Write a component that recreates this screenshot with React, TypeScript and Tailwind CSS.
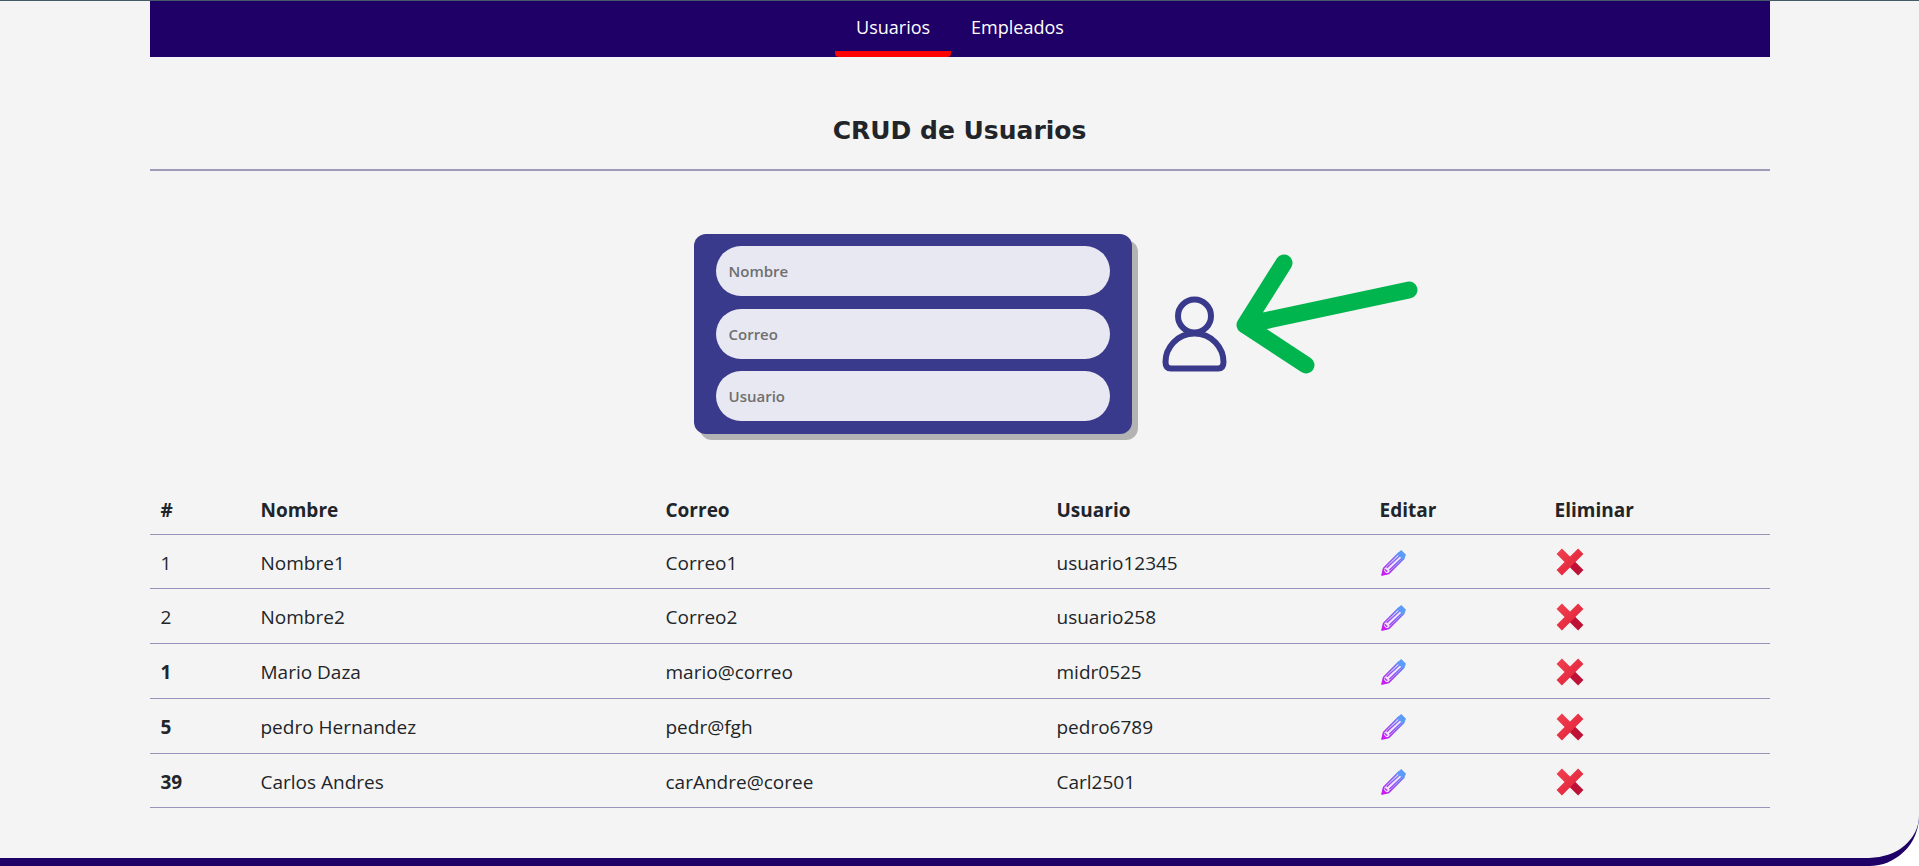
const ROWS = [
  { id: "1", strong: false, nombre: "Nombre1", correo: "Correo1", usuario: "usuario12345" },
  { id: "2", strong: false, nombre: "Nombre2", correo: "Correo2", usuario: "usuario258" },
  { id: "1", strong: true, nombre: "Mario Daza", correo: "mario@correo", usuario: "midr0525" },
  { id: "5", strong: true, nombre: "pedro Hernandez", correo: "pedr@fgh", usuario: "pedro6789" },
  { id: "39", strong: true, nombre: "Carlos Andres", correo: "carAndre@coree", usuario: "Carl2501" },
];

function PencilIcon({ uid }: { uid: string }) {
  return (
    <svg width="27" height="27" viewBox="0 0 26 26" fill="none" aria-hidden="true">
      <defs>
        <linearGradient id={uid} x1="2" y1="25" x2="24" y2="2" gradientUnits="userSpaceOnUse">
          <stop offset="0" stopColor="#c81cf0" />
          <stop offset="1" stopColor="#4f96f8" />
        </linearGradient>
      </defs>
      <path
        d="M18 4 23 9 8.5 23.5 2 25 3.5 18.5Z"
        fill="#efe6fb"
        stroke={`url(#${uid})`}
        strokeWidth="1.5"
        strokeLinejoin="round"
      />
      <path d="M6.5 18 19 6.5M9 20.5 21 9M4.5 19.5 7 22" stroke={`url(#${uid})`} strokeWidth="1.4" />
      <path d="M17.5 3.5 20.5 1 25 5.5 24 8 22.5 10 16 5Z" fill="#5b9cf8" />
      <path d="M1.5 25.5 2.8 20 7 24.2Z" fill="#c81cf0" />
    </svg>
  );
}

function CrossIcon({ uid }: { uid: string }) {
  return (
    <svg width="28" height="28" viewBox="0 0 26 26" aria-hidden="true">
      <defs>
        <linearGradient id={uid} x1="2" y1="2" x2="24" y2="24" gradientUnits="userSpaceOnUse">
          <stop offset="0" stopColor="#f0404f" />
          <stop offset="1" stopColor="#e01f38" />
        </linearGradient>
      </defs>
      <path d="M13 13 23 23" stroke="#bd1236" strokeWidth="7" />
      <path d="M3 3 13 13M23 3 3 23" stroke={`url(#${uid})`} strokeWidth="7" />
    </svg>
  );
}

function UserIcon() {
  return (
    <svg width="72" height="76" viewBox="0 0 72 76" fill="none" aria-hidden="true">
      <circle cx="35.5" cy="20" r="16.5" stroke="#3a3a8c" strokeWidth="6" />
      <path
        d="M35.5 37.5C18 37.5 6.5 52 6.5 66C6.5 70.5 8.5 72.5 12 72.5H59C62.5 72.5 64.5 70.5 64.5 66C64.5 52 53 37.5 35.5 37.5Z"
        stroke="#3a3a8c"
        strokeWidth="6"
        strokeLinejoin="round"
      />
    </svg>
  );
}

function ArrowMark() {
  return (
    <svg width="200" height="130" viewBox="0 0 200 130" fill="none" aria-hidden="true">
      <path
        d="M62 13 23 75 84 115M23 75 187 40"
        stroke="#00b44e"
        strokeWidth="17"
        strokeLinecap="round"
        strokeLinejoin="round"
      />
    </svg>
  );
}

function Field({ label }: { label: string }) {
  return (
    <input
      placeholder={label}
      className="h-[50px] w-full rounded-[25px] bg-[#e8e8f2] px-[13px] text-[15px] font-semibold outline-none placeholder:text-[#6f6f6f]"
    />
  );
}

export default function App() {
  return (
    <div className="h-[866px] overflow-hidden rounded-br-[50px] border-t border-b-8 border-t-[#445a66] border-b-[#1f0066] bg-[#f4f4f4] font-['Open_Sans',sans-serif] text-[#212529]">
      <div className="mx-auto w-[1620px]">
        <nav className="flex h-14 justify-center bg-[#1f0066] text-[18px] text-white">
          <a className="flex h-full w-[116px] items-start justify-center rounded-b-[4px] border-b-[6px] border-b-[#ff0000] pt-[13px]">
            Usuarios
          </a>
          <a className="flex h-full items-start justify-center px-5 pt-[13px]">Empleados</a>
        </nav>

        <h1 className="mt-[56px] text-center font-['DejaVu_Sans',sans-serif] text-[25px] leading-9 font-bold">
          CRUD de Usuarios
        </h1>
        <hr className="mt-[20px] border-t-2 border-[#a09ab8]" />

        <div className="mt-[63px] flex items-start pl-[544px]">
          <form className="flex h-[200px] w-[438px] flex-col gap-[12.5px] rounded-xl bg-[#3a3a8c] px-[22px] pt-3 shadow-[6px_6px_0_#b3b3b3]">
            <Field label="Nombre" />
            <Field label="Correo" />
            <Field label="Usuario" />
          </form>
          <div className="mt-[62px] ml-[27px]">
            <UserIcon />
          </div>
          <div className="mt-[16px] ml-[-9px]">
            <ArrowMark />
          </div>
        </div>

        <table className="mt-[52px] w-full table-fixed border-collapse text-[19px]">
          <colgroup>
            <col className="w-[101px]" />
            <col className="w-[405px]" />
            <col className="w-[391px]" />
            <col className="w-[323px]" />
            <col className="w-[175px]" />
            <col />
          </colgroup>
          <thead>
            <tr className="h-[48px] border-b border-[#9a94bd] text-left">
              {["#", "Nombre", "Correo", "Usuario", "Editar", "Eliminar"].map((h, i) => (
                <th key={h} className={i === 0 ? "pr-2.5 pl-[11px] font-bold" : "px-2.5 font-bold"}>
                  {h}
                </th>
              ))}
            </tr>
          </thead>
          <tbody>
            {ROWS.map((row, i) => (
              <tr key={i} className="h-[54.8px] border-b border-[#9a94bd]">
                <td className={row.strong ? "pt-[3px] pr-2.5 pl-[11px] font-bold" : "pt-[3px] pr-2.5 pl-[11px]"}>
                  {row.id}
                </td>
                <td className="px-2.5 pt-[3px]">{row.nombre}</td>
                <td className="px-2.5 pt-[3px]">{row.correo}</td>
                <td className="px-2.5 pt-[3px]">{row.usuario}</td>
                <td className="px-2.5 pt-[2px]">
                  <PencilIcon uid={`pencil-${i}`} />
                </td>
                <td className="px-2.5 pt-[2px]">
                  <div className="ml-[1px]">
                    <CrossIcon uid={`cross-${i}`} />
                  </div>
                </td>
              </tr>
            ))}
          </tbody>
        </table>
      </div>
    </div>
  );
}
